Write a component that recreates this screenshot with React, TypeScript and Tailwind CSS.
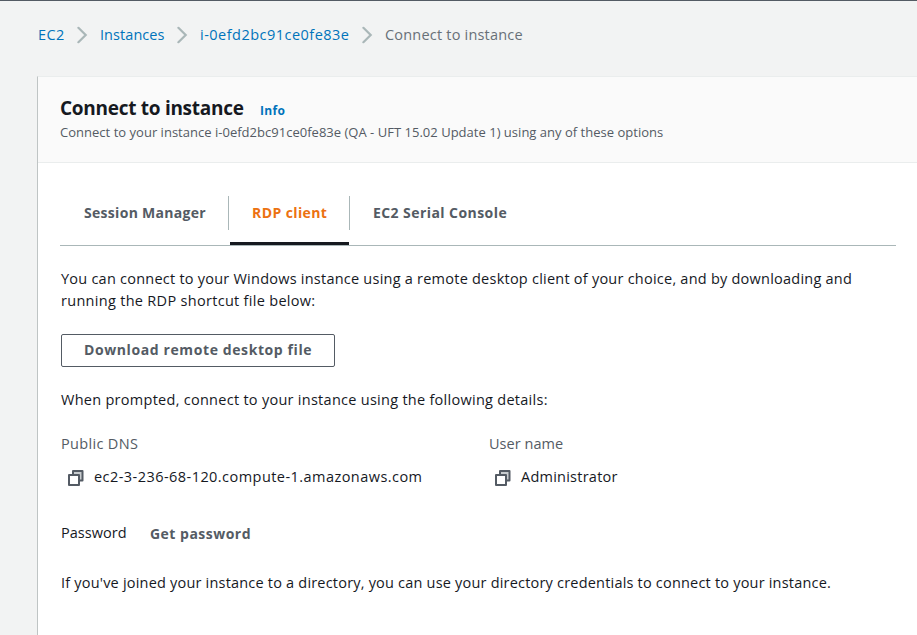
function Chevron() {
  return (
    <svg className="h-[18px] w-[11px] shrink-0" viewBox="0 0 11 18" fill="none" stroke="#aab7b8" strokeWidth="2.2" strokeLinecap="round">
      <path d="M1.4 1.8 8.7 9 1.4 16.2" />
    </svg>
  );
}

function CopyIcon() {
  return (
    <svg className="mt-[2px] h-4 w-4 shrink-0" viewBox="0 0 16 16" fill="none" stroke="#545b64" strokeWidth="2" strokeLinejoin="round">
      <path d="M5 5V1h9.5v9.500H11" fill="#c8cccf" />
      <path d="M1 5h10v10H1z" fill="#fff" />
    </svg>
  );
}

export default function App() {
  return (
    <div className="flex h-[635px] w-[917px] flex-col overflow-hidden border-t border-[#545b64] bg-[#f2f3f3] font-['Open_Sans',sans-serif] text-[14.5px] leading-[22px] whitespace-nowrap text-[#16191f]">
      <nav className="mt-[23px] flex h-[22px] items-center pl-[38px] text-[#0073bb]">
        <a className="w-[39px] tracking-[0.4px]">EC2</a>
        <Chevron />
        <a className="ml-[12px] w-[77px] tracking-[0.06px]">Instances</a>
        <Chevron />
        <a className="ml-[12px] w-[162px] tracking-[0.48px]">i-0efd2bc91ce0fe83e</a>
        <Chevron />
        <span className="ml-[12px] tracking-[0.2px] text-[#687078]">Connect to instance</span>
      </nav>

      <main className="mt-[30px] ml-[37px] flex flex-1 flex-col border-t border-l border-t-[#eaeded] border-l-[#bfc4c4] bg-white">
        <header className="h-[86px] border-b border-[#eaeded] bg-[#fafafa] pt-[18px] pl-[22px]">
          <div className="flex items-baseline">
            <h1 className="w-[200px] text-[19px] leading-[26px] font-bold tracking-[-0.28px]">Connect to instance</h1>
            <a className="text-[12px] font-bold tracking-[0.35px] text-[#0073bb]">Info</a>
          </div>
          <p className="text-[13px] leading-[20px] tracking-[0.018px] text-[#545b64]">
            Connect to your instance i-0efd2bc91ce0fe83e (QA - UFT 15.02 Update 1) using any of these options
          </p>
        </header>

        <div className="mr-[21px] ml-[22px]">
          <div className="mt-[22px] flex h-[61px] border-b border-[#aab7b8] pt-[11px] text-[14px] font-bold text-[#545b64]">
            <div className="h-[34px] w-[169px] border-r border-[#aab7b8] pt-[6px] pl-[24px] tracking-[0.3px]">Session Manager</div>
            <div className="ml-px flex h-[49px] w-[120px] flex-col">
              <div className="h-[34px] border-r border-[#aab7b8] pt-[6px] pl-[22px] tracking-[0.4px] text-[#ec7211]">RDP client</div>
              <div className="mt-[12px] h-[3px] w-[119px] bg-[#16191f]" />
            </div>
            <div className="pt-[6px] pl-[23px] tracking-[0.43px]">EC2 Serial Console</div>
          </div>

          <div className="pl-px">
            <p className="mt-[22px] tracking-[0.235px]">
              You can connect to your Windows instance using a remote desktop client of your choice, and by downloading and
              <br />
              <span className="tracking-[0.3px]">running the RDP shortcut file below:</span>
            </p>
            <button className="mt-[22px] flex h-[33px] w-[274px] rounded-[2px] border border-[#545b64] pt-[4px] pl-[22px] text-left text-[14px] font-bold tracking-[0.6px] text-[#545b64]">
              Download remote desktop file
            </button>
            <p className="mt-[22px] tracking-[0.275px]">When prompted, connect to your instance using the following details:</p>

            <div className="mt-[22px] flex">
              <div className="w-[428px]">
                <div className="tracking-[0.33px] text-[#545b64]">Public DNS</div>
                <div className="mt-[11px] flex items-center gap-[10px] pl-[7px]">
                  <CopyIcon />
                  <span className="tracking-[0.45px]">ec2-3-236-68-120.compute-1.amazonaws.com</span>
                </div>
              </div>
              <div>
                <div className="tracking-[0.05px] text-[#545b64]">User name</div>
                <div className="mt-[11px] flex items-center gap-[10px] pl-[6px]">
                  <CopyIcon />
                  <span className="tracking-[0.24px]">Administrator</span>
                </div>
              </div>
            </div>

            <div className="mt-[34px] flex">
              <span className="w-[89px] tracking-[0.04px]">Password</span>
              <a className="pt-px text-[14px] font-bold tracking-[0.48px] text-[#545b64]">Get password</a>
            </div>
            <p className="mt-[27px] tracking-[0.2px]">
              If you've joined your instance to a directory, you can use your directory credentials to connect to your instance.
            </p>
          </div>
        </div>
      </main>
    </div>
  );
}
